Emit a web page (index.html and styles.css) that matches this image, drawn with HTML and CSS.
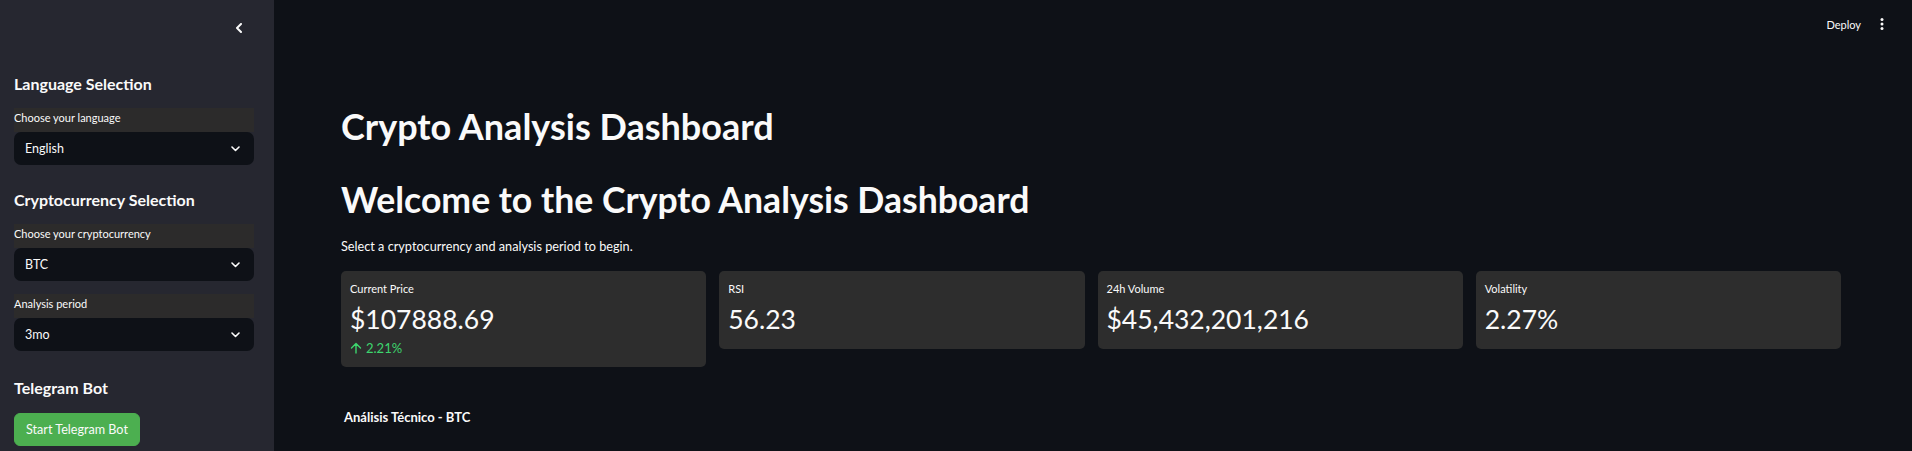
FILE: index.html
```html
<!DOCTYPE html>
<html lang="en">
<head>
<meta charset="utf-8">
<title>Crypto Analysis Dashboard</title>
<link rel="stylesheet" href="styles.css">
</head>
<body>
<div class="app">
  <aside class="sidebar">
    <div class="sb-top">
      <svg class="collapse" width="8" height="10" viewBox="0 0 8 10"><path d="M6 1 L2 5 L6 9" fill="none" stroke="#fafafa" stroke-width="2" stroke-linecap="round" stroke-linejoin="round"/></svg>
    </div>
    <div class="sb-content">
      <h3 class="sb-heading">Language Selection</h3>
      <div class="field">
        <div class="field-label">Choose your language</div>
        <div class="select"><span>English</span><svg width="9" height="6" viewBox="0 0 9 6"><path d="M1 1 L4.5 4.5 L8 1" fill="none" stroke="#fafafa" stroke-width="1.6" stroke-linecap="round" stroke-linejoin="round"/></svg></div>
      </div>
      <h3 class="sb-heading">Cryptocurrency Selection</h3>
      <div class="field">
        <div class="field-label">Choose your cryptocurrency</div>
        <div class="select"><span>BTC</span><svg width="9" height="6" viewBox="0 0 9 6"><path d="M1 1 L4.5 4.5 L8 1" fill="none" stroke="#fafafa" stroke-width="1.6" stroke-linecap="round" stroke-linejoin="round"/></svg></div>
      </div>
      <div class="field field-next">
        <div class="field-label">Analysis period</div>
        <div class="select"><span>3mo</span><svg width="9" height="6" viewBox="0 0 9 6"><path d="M1 1 L4.5 4.5 L8 1" fill="none" stroke="#fafafa" stroke-width="1.6" stroke-linecap="round" stroke-linejoin="round"/></svg></div>
      </div>
      <h3 class="sb-heading sb-heading-last">Telegram Bot</h3>
      <button class="btn-green">Start Telegram Bot</button>
    </div>
  </aside>
  <main class="main">
    <header class="topbar">
      <span class="deploy">Deploy</span>
      <svg class="kebab" width="4" height="14" viewBox="0 0 4 14"><circle cx="2" cy="2.5" r="1.5" fill="#fafafa"/><circle cx="2" cy="7" r="1.5" fill="#fafafa"/><circle cx="2" cy="11.5" r="1.5" fill="#fafafa"/></svg>
    </header>
    <div class="content">
      <h1 class="title">Crypto Analysis Dashboard</h1>
      <h1 class="title title-2">Welcome to the Crypto Analysis Dashboard</h1>
      <p class="intro">Select a cryptocurrency and analysis period to begin.</p>
      <div class="metrics">
        <div class="metric">
          <div class="metric-label">Current Price</div>
          <div class="metric-value">$107888.69</div>
          <div class="metric-delta"><svg width="12" height="12" viewBox="0 0 12 12"><path d="M6 11 V1.5 M1.5 6 L6 1.5 L10.5 6" fill="none" stroke="#3dd56d" stroke-width="1.4" stroke-linecap="round" stroke-linejoin="round"/></svg><span>2.21%</span></div>
        </div>
        <div class="metric">
          <div class="metric-label">RSI</div>
          <div class="metric-value">56.23</div>
        </div>
        <div class="metric">
          <div class="metric-label">24h Volume</div>
          <div class="metric-value">$45,432,201,216</div>
        </div>
        <div class="metric">
          <div class="metric-label">Volatility</div>
          <div class="metric-value">2.27%</div>
        </div>
      </div>
      <div class="chart-title">Análisis Técnico - BTC</div>
    </div>
  </main>
</div>
</body>
</html>
```
FILE: styles.css
```css
* { box-sizing: border-box; }
html, body {
  margin: 0;
  padding: 0;
  height: 451px;
  overflow: hidden;
  background: #0e1117;
  color: #fafafa;
  font-family: Lato, "Noto Sans", sans-serif;
}
.app {
  display: flex;
  height: 451px;
}
.sidebar {
  width: 274px;
  flex: none;
  background: #262730;
  display: flex;
  flex-direction: column;
}
.sb-top {
  height: 56px;
  display: flex;
  justify-content: flex-end;
  align-items: center;
  padding-right: 31px;
}
.collapse { display: block; }
.sb-content {
  padding: 0 20px 0 14px;
  display: flex;
  flex-direction: column;
  align-items: flex-start;
}
.sb-heading {
  margin: 18px 0 14px;
  font-size: 16px;
  line-height: 20px;
  font-weight: 700;
}
.field { width: 240px; }
.field-next { margin-top: 13px; }
.field-label {
  background: #2c2b2b;
  font-size: 11px;
  line-height: 20px;
  height: 24px;
  padding-bottom: 4px;
}
.select {
  height: 33px;
  background: #0e1117;
  border-radius: 7px;
  display: flex;
  align-items: center;
  justify-content: space-between;
  padding: 0 14px 0 11px;
  font-size: 12.5px;
}
.select svg { display: block; }
.field + .sb-heading { margin-top: 25px; }
.field + .sb-heading-last { margin-top: 27px; margin-bottom: 15px; }
.btn-green {
  margin: 0;
  height: 33px;
  padding: 0 11px;
  background: #4caf50;
  color: #fafafa;
  border: 1px solid #4caf50;
  border-radius: 6px;
  font-family: inherit;
  font-size: 12.6px;
}
.main {
  flex: 1;
  display: flex;
  flex-direction: column;
}
.topbar {
  height: 48px;
  display: flex;
  justify-content: flex-end;
  align-items: center;
  gap: 19px;
  padding-right: 28px;
}
.deploy { font-size: 11px; }
.kebab { display: block; }
.content {
  padding: 0 71px 0 67px;
}
.title {
  margin: 0;
  font-size: 36px;
  line-height: 44px;
  font-weight: 700;
}
.content > .title:first-child { margin-top: 56px; }
.title-2 { margin-top: 30px; font-size: 35.6px; }
.intro {
  margin: 14px 0 0;
  font-size: 12.7px;
  line-height: 20px;
}
.metrics {
  margin-top: 15px;
  display: grid;
  grid-template-columns: repeat(4, 1fr);
  gap: 13px;
  align-items: start;
}
.metric {
  background: #2d2d2d;
  border-radius: 5px;
  padding: 10px 9px 13px;
}
.metric-label {
  font-size: 11px;
  line-height: 16px;
}
.metric-value {
  font-size: 26.5px;
  line-height: 34px;
  margin-top: 5px;
}
.metric-delta {
  display: flex;
  align-items: center;
  gap: 4px;
  margin-top: 6px;
  color: #3dd56d;
  font-size: 13px;
  line-height: 12px;
}
.metric-delta svg { display: block; }
.chart-title {
  margin: 42px 0 0 3px;
  font-size: 13px;
  font-weight: 700;
  line-height: 16px;
}
```
